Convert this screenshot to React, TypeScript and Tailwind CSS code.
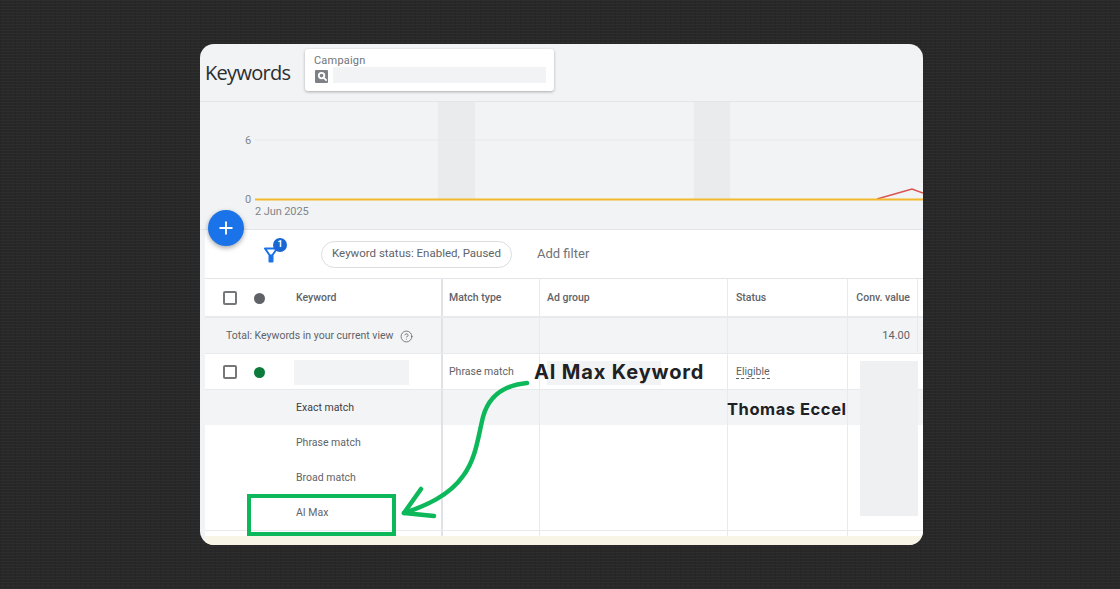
import { CircleHelp, Plus } from "lucide-react";

const COLS = "grid grid-cols-[238px_97px_188px_120px_70px_5px]";
const LINE = "border-r border-[#e8eaec]";

function Checkbox() {
  return <div className="ml-[18px] h-[13.5px] w-[13.5px] shrink-0 rounded-[2px] border-2 border-[#757779]" />;
}

function TableRow({
  className,
  first,
  match,
  group,
  status,
  value,
}: {
  className: string;
  first: React.ReactNode;
  match?: React.ReactNode;
  group?: React.ReactNode;
  status?: React.ReactNode;
  value?: React.ReactNode;
}) {
  return (
    <div className={`${COLS} ${className}`}>
      <div className="flex items-center border-r-2 border-[#e0e2e5] pt-px">{first}</div>
      <div className={`flex items-center pl-[6px] pt-px ${LINE}`}>{match}</div>
      <div className={`flex items-center pl-[7px] pt-px ${LINE}`}>{group}</div>
      <div className={`flex items-center pl-[8px] pt-px ${LINE}`}>{status}</div>
      <div className={`flex items-center justify-end pr-[7px] pt-px ${value ? LINE : ""}`}>{value}</div>
      <div />
    </div>
  );
}

function MatchLabel({ label, strong }: { label: string; strong?: boolean }) {
  return <span className={`pl-[91px] ${strong ? "text-[#3c4043]" : ""}`}>{label}</span>;
}

function Chart() {
  return (
    <div className="relative h-[128px] shrink-0 border-b border-[#e3e5e8] text-[11px] text-[#80868b]">
      <svg className="absolute inset-0" width="723" height="128" viewBox="0 0 723 128" fill="none">
        <rect x="238" y="0" width="37" height="97" fill="#e9ebed" />
        <rect x="494" y="0" width="36" height="97" fill="#e9ebed" />
        <path d="M55 38H723" stroke="#e6e8eb" strokeWidth="1" />
        <path d="M677 97L712 87L723 91" stroke="#d9534f" strokeWidth="1.5" />
        <path d="M55 97.5H723" stroke="#f2b92d" strokeWidth="2" />
      </svg>
      <span className="absolute left-[45px] top-[31px]">6</span>
      <span className="absolute left-[45px] top-[90px]">0</span>
      <span className="absolute left-[55px] top-[102px] tracking-[-0.1px]">2 Jun 2025</span>
    </div>
  );
}

export default function App() {
  return (
    <div className="h-[589px] w-[1120px] overflow-hidden bg-[#282828] bg-[repeating-linear-gradient(0deg,#2d2d2d_0px,#2d2d2d_1px,transparent_1px,transparent_3px),repeating-linear-gradient(90deg,#242424_0px,#242424_1px,transparent_1px,transparent_5px)] pl-[200px] pt-[44px] font-['Roboto',sans-serif]">
      <div className="relative flex h-[501px] w-[723px] flex-col overflow-hidden rounded-[14px] bg-[#f2f3f5]">
        {/* page title + campaign picker */}
        <div className="flex h-[58px] shrink-0 items-start border-b border-[#e3e5e8] pl-[5px]">
          <h1 className="mt-[16px] w-[100px] font-['Open_Sans',sans-serif] text-[20px] leading-[26px] tracking-[-0.7px] text-[#2b2d30]">
            Keywords
          </h1>
          <div className="mt-[5px] h-[42px] w-[249px] rounded-[3px] bg-white pl-[9px] pt-[5px] shadow-[0_1px_3px_rgba(60,64,67,0.4)]">
            <div className="text-[11px] leading-[13px] tracking-[0.2px] text-[#70757a]">Campaign</div>
            <div className="flex items-end pl-px">
              <div className="flex h-[13px] w-[13px] items-center justify-center rounded-[1px] bg-[#7d8084] pl-[2px]">
                <svg width="11" height="11" viewBox="0 0 24 24" fill="none" stroke="#fff" strokeWidth="4">
                  <circle cx="10" cy="10" r="6" />
                  <path d="M15 15l6 6" />
                </svg>
              </div>
              <div className="ml-[5px] h-[16px] w-[213px] bg-[#f1f3f4]" />
            </div>
          </div>
        </div>

        <Chart />

        <div className="flex min-h-0 flex-1 flex-col pl-[5px]">
          <div className="flex min-h-0 flex-1 flex-col bg-white">
            {/* filter bar */}
            <div className="flex h-[49px] shrink-0 items-center border-b border-[#e3e5e8] pl-[59px]">
              <div className="relative h-[18px] w-[18px]">
                <svg className="mt-[2px]" width="14" height="16" viewBox="0 0 14 16" fill="#1a73e8" stroke="#1a73e8" strokeWidth="1">
                  <path d="M1 1.5h12L8.5 8v6.5h-3V8z" fill="none" strokeWidth="2" strokeLinejoin="round" />
                  <path d="M5.5 8h3v6.5h-3z" />
                </svg>
                <span className="absolute left-[9px] top-[-7px] flex h-[14px] w-[14px] items-center justify-center rounded-full bg-[#1967d2] text-[9px] font-bold text-white">
                  1
                </span>
              </div>
              <div className="ml-[39px] flex h-[27px] w-[191px] items-center justify-center rounded-full border border-[#dadce0] text-[11.5px] text-[#5f6368] [font-weight:450]">
                Keyword status: Enabled, Paused
              </div>
              <span className="ml-[25px] text-[13px] text-[#6f7377] [font-weight:450]">Add filter</span>
            </div>

            {/* table */}
            <div className="flex min-h-0 flex-1 flex-col text-[10.5px] text-[#5f6368]">
              <TableRow
                className="h-[39px] border-b-2 border-[#e8eaec] font-medium"
                first={
                  <>
                    <Checkbox />
                    <span className="ml-[17.5px] h-[11px] w-[11px] rounded-full bg-[#5f6368]" />
                    <span className="ml-[31px]">Keyword</span>
                  </>
                }
                match={<span>Match type</span>}
                group={<span>Ad group</span>}
                status={<span>Status</span>}
                value={<span>Conv. value</span>}
              />
              <TableRow
                className="h-[36px] border-b border-[#e8eaec] bg-[#f3f4f6]"
                first={
                  <span className="flex items-center pl-[21px]">
                    Total: Keywords in your current view
                    <CircleHelp className="ml-[7px] text-[#5f6368]" size={13} strokeWidth={1.5} />
                  </span>
                }
                value={<span className="text-[11px]">14.00</span>}
              />
              <TableRow
                className="h-[36px] border-b border-[#e8eaec]"
                first={
                  <>
                    <Checkbox />
                    <span className="ml-[17.5px] h-[11px] w-[11px] rounded-full bg-[#0b7a3b]" />
                    <span className="ml-[29px] h-[25px] w-[115px] bg-[#f1f3f4]" />
                  </>
                }
                match={<span>Phrase match</span>}
                status={
                  <span className="border-b border-dashed border-[#5f6368] leading-[13px]">Eligible</span>
                }
              />
              <TableRow className="h-[35px] bg-[#f3f4f6]" first={<MatchLabel label="Exact match" strong />} />
              <TableRow className="h-[35px]" first={<MatchLabel label="Phrase match" />} />
              <TableRow className="h-[35px]" first={<MatchLabel label="Broad match" />} />
              <TableRow className="h-[36px] border-b border-[#e8eaec]" first={<MatchLabel label="AI Max" />} />
              <div className={`${COLS} min-h-0 flex-1`}>
                <div className="border-r-2 border-[#e0e2e5]" />
                <div className={LINE} />
                <div className={LINE} />
                <div className={LINE} />
              </div>
            </div>
          </div>
          <div className="h-[9px] shrink-0 bg-[#f8f4e6]" />
        </div>

        {/* floating add button */}
        <div className="absolute left-[8px] top-[166px] flex h-[36px] w-[36px] items-center justify-center rounded-full bg-[#1a73e8] shadow-[0_2px_5px_rgba(0,0,0,0.35)]">
          <Plus className="text-white" size={20} strokeWidth={2.2} />
        </div>

        {/* annotation layer */}
        <div className="absolute left-[347px] top-[317px] h-[24px] w-[114px] bg-[#f1f3f4]" />
        <div className="absolute left-[660px] top-[317px] h-[155px] w-[58px] bg-[#eef0f2]" />
        <span className="absolute left-[334px] top-[314px] font-['Inter',sans-serif] text-[20px] font-bold leading-[28px] tracking-[0.85px] text-[#202124]">
          AI Max Keyword
        </span>
        <span className="absolute left-[527px] top-[354px] font-['Inter',sans-serif] text-[16.5px] font-bold leading-[22px] tracking-[0.55px] text-[#202124]">
          Thomas Eccel
        </span>
        <div className="absolute left-[47px] top-[450px] h-[42px] w-[149px] border-[4.5px] border-[#0cb85a]" />
        <svg className="absolute left-[190px] top-[325px]" width="150" height="160" viewBox="390 369 150 160" fill="none" stroke="#0cb85a" strokeWidth="4.5" strokeLinecap="round" strokeLinejoin="round">
          <path d="M527 383C505 385 489 395 483 417C478 437 476 459 463 476C449 496 425 506 404 513" />
          <path d="M421 489L404 513L434 516" />
        </svg>
      </div>
    </div>
  );
}
